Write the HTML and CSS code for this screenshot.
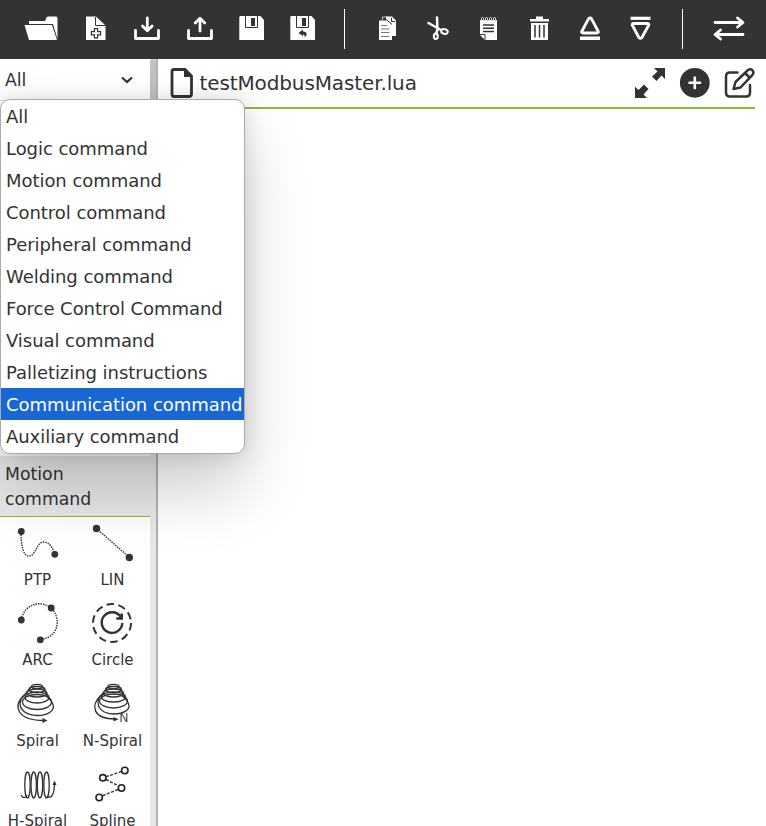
FILE: index.html
```html
<!DOCTYPE html>
<html lang="en">
<head>
<meta charset="utf-8">
<title>Program editor</title>
<link rel="stylesheet" href="styles.css">
</head>
<body>
<header class="toolbar">
  <svg class="tool first" viewBox="20 10 50 40"><path d="M29 21h16l1.500-3.500q.5-1 2-1H56q1.500 0 1.500 1.500V39L53 24H29z"/><path d="M24.500 25H52l5 15H29z"/></svg>
  <svg class="tool" viewBox="70 10 51 40"><path d="M86 16.500h10l9.500 9V40H86z"/><path class="dark-line thin" d="M95.500 17v8.500h10"/><path class="dark-fill" d="M93.800 28h4.400v3h3v4.400h-3v3h-4.400v-3h-3V31h3z"/><path d="M95 29.200h2v3h3v2h-3v3h-2v-3h-3v-2h3z"/></svg>
  <svg class="tool" viewBox="121 10 51 40"><path class="line" d="M135.500 30.500v8h23v-8M147.300 18v12.500M142.500 26l4.800 4.800 4.800-4.800"/></svg>
  <svg class="tool" viewBox="172 10 51 40"><path class="line" d="M188.500 30.500v8h23v-8M200 31V18.500M195.200 23l4.800-4.800 4.800 4.800"/></svg>
  <svg class="tool" viewBox="223 10 51 40"><path d="M240 16h20.500l3.500 4v20H239.300V17z"/><path class="dark-line thin" d="M245.500 16v11.500h12V16"/><path class="dark-fill" d="M251 18h4v8h-4z"/></svg>
  <svg class="tool" viewBox="274 10 51 40"><path d="M291 16h20.500l3.500 4v20H290.300V17z"/><path class="dark-line thin" d="M296.500 16v11.500h12V16"/><path class="dark-fill" d="M302 18h4v8h-4zM298.500 33l4.500-3.500v2c4 0 5 3.500 1.500 6 .5-2 0-3-1.500-3V36z"/></svg>
  <span class="divider"></span>
  <svg class="tool after" viewBox="361 10 51 40"><path d="M386 16.500h6l4 4V36h-4V24l-6-5z"/><path class="dim-line" d="M382.500 20v-3h6"/><path d="M379 20.500h9.500l3.500 3.500V40h-13z"/><path class="dark-line gray" d="M381 25.500h6M381 29h8.500M381 32.500h8.500M381 36.500h8.500"/><path class="dark-line thin" d="M387.500 20.500l4.500 4M391.500 18v3.500h3.500"/></svg>
  <svg class="tool" viewBox="412 10 51 40"><path class="line cut" d="M428.500 23l12.500 7M437 17.500l.5 12-1.500 4.500"/><ellipse class="line ring" cx="435.800" cy="36.300" rx="2" ry="2.800"/><ellipse class="line ring" cx="444.500" cy="31.500" rx="3.300" ry="2.300" transform="rotate(15 444.500 31.500)"/></svg>
  <svg class="tool" viewBox="463 10 51 40"><path d="M480 20h17v20h-12l-5-5z"/><path class="dim-line" d="M481.500 21v-3l1-1 1 1v3M485.500 21v-3l1-1 1 1v3M489.500 21v-3l1-1 1 1v3M493.500 21v-3l1-1 1 1v3"/><path class="dark-line thick" d="M483 25h11M483 28.300h11M483 31.500h11"/><path class="dark-line thin" d="M480 34.500h5V40"/></svg>
  <svg class="tool" viewBox="514 10 51 40"><path d="M530 19h6v-2.500h7V19h6v2.500h-19zM531 23h17v17h-17z"/><path class="dark-line thick" d="M535 25v12.500M539.500 25v12.500M544 25v12.500"/></svg>
  <svg class="tool" viewBox="565 10 51 40"><path class="line" d="M588.500 18.800l-6.800 12.700q-.5 1.500 1.500 1.500h13.600q2 0 1.500-1.500l-6.800-12.700q-1.500-1.600-3 0z"/><path d="M580 36.500h20V40h-20z"/></svg>
  <svg class="tool" viewBox="616 10 51 40"><path d="M630.500 16.700h20v3.200h-20z"/><path class="line" d="M638.900 37.500l-6.700-12.500q-.5-1.500 1.500-1.500h13.600q2 0 1.500 1.500l-6.900 12.500q-1.500 1.600-3 0z"/></svg>
  <span class="divider second"></span>
  <svg class="tool last" viewBox="700 10 60 40"><path class="line" d="M715 22.500h27M737.500 18l5.500 4.500-5.500 4.500M743 34.500h-27M720.500 30l-5.500 4.500 5.500 4.500"/></svg>
</header>
<div class="workspace">
  <aside class="sidebar">
    <div class="filter"><span>All</span><svg class="caret" viewBox="0 0 14 10"><path d="M2 2.500l5 4.500 5-4.500"/></svg>
      <ul class="menu">
        <li>All</li><li>Logic command</li><li>Motion command</li><li>Control command</li><li>Peripheral command</li><li>Welding command</li><li>Force Control Command</li><li>Visual command</li><li>Palletizing instructions</li><li class="selected">Communication command</li><li>Auxiliary command</li>
      </ul>
    </div>
    <div class="hidden-section"></div>
    <h2 class="group">Motion command</h2>
    <div class="commands">
      <div class="command"><svg viewBox="0 520 75 48"><path class="dotted" d="M21 532c0 13 2 24 8 24 7 0 7-14 15-14 5 0 8 5 11 12"/><circle cx="21.300" cy="531.500" r="3.400"/><circle cx="54.800" cy="554.300" r="3.400"/></svg><span>PTP</span></div>
      <div class="command"><svg viewBox="75 520 75 48"><path class="dotted" d="M96.500 528.500l33 29"/><circle cx="96.500" cy="528.500" r="3.700"/><circle cx="129.300" cy="557.500" r="3.700"/></svg><span>LIN</span></div>
      <div class="command"><svg viewBox="0 600 75 48"><path class="dotted" d="M21.500 620A18 18 0 0 1 51 608c10 9 9 29-10.500 31.500"/><circle cx="21.300" cy="620" r="3.400"/><circle cx="51.200" cy="608" r="3.400"/><circle cx="40.300" cy="639.800" r="3.400"/></svg><span>ARC</span></div>
      <div class="command"><svg viewBox="75 600 75 48"><circle class="stroke dash" cx="112" cy="623" r="19"/><path class="stroke turn" d="M121 617.500a10.300 10.300 0 1 0 1.300 5.500M121.800 613.500v5h-5.500"/></svg><span>Circle</span></div>
      <div class="command"><svg viewBox="0 680 75 48"><g class="coil"><ellipse cx="37" cy="685.500" rx="5.500" ry="2.200"/><ellipse cx="37" cy="688.500" rx="8" ry="3"/><ellipse cx="37" cy="692" rx="10" ry="4"/><ellipse cx="37" cy="696.500" rx="12" ry="5.500"/><ellipse cx="37" cy="701" rx="14.500" ry="7.500"/><path d="M23 695c-8 12 2 19.500 15 19.500 10 0 17-5 15-11-.5-3-5-7-8-9.500M24 694c-12 12-6 25.500 20 25.500M22 697l9-11M42.500 686l5.500 9"/></g><path d="M42.500 717l5 2.500-5 2.500z"/></svg><span>Spiral</span></div>
      <div class="command"><svg viewBox="75 680 75 48"><g class="coil"><ellipse cx="113.500" cy="685.500" rx="5.500" ry="2.200"/><ellipse cx="113.500" cy="688.500" rx="8" ry="3"/><ellipse cx="113.500" cy="692" rx="10" ry="4"/><ellipse cx="113.500" cy="696" rx="12" ry="5"/><ellipse cx="113.500" cy="700" rx="14" ry="7"/><path d="M100 695c-6 11 3 18 14 18 10 0 17-5 14.500-10-.5-3-5-7-8-9.500M101 694c-11 11-8 24 14 24M99 697l9-11M119 686l5.500 9"/></g><path d="M113.500 716l5 2.200-5 2.200z"/><text class="letter" x="119.500" y="721">N</text></svg><span>N-Spiral</span></div>
      <div class="command"><svg viewBox="0 760 75 48"><g class="coil"><ellipse cx="27.500" cy="784" rx="2.700" ry="13"/><ellipse cx="33.700" cy="784" rx="2.700" ry="13"/><ellipse cx="40" cy="784" rx="2.700" ry="13"/><ellipse cx="46.500" cy="784" rx="2.700" ry="13"/><path d="M21 794c2 4 5 3 6 0M47 795c4 4 7.500-2 7.500-13"/></g><path d="M52.500 784l2-4.500 2 4.500z"/></svg><span>H-Spiral</span></div>
      <div class="command"><svg viewBox="75 760 75 48"><path class="stroke link" d="M121.500 770.500l-15 5M106 778.500l12 6M118 788.500l-15 6"/><g class="node"><circle cx="124.800" cy="769.500" r="3.200"/><circle cx="102.800" cy="776.800" r="3.200"/><circle cx="121.500" cy="787" r="3.200"/><circle cx="99.200" cy="796.500" r="3.200"/></g></svg><span>Spline</span></div>
    </div>
  </aside>
  <div class="scrollbar"><div class="thumb"></div></div>
  <main class="editor">
    <div class="file-bar">
      <svg class="file-icon" viewBox="170 67 24 32"><path class="stroke" d="M174 69.500h11l6.500 6.500v18q0 2.500-2.500 2.500h-15q-2 0-2-2.500V71.500q0-2 2-2z"/><path d="M184 69l8 8h-8z"/></svg>
      <h1>testModbusMaster.lua</h1>
      <svg class="actions" viewBox="630 63 125 40"><path d="M654 68h11v11l-3.500-3.500-5 5.500-4.500-4.500 5.500-5zM635 98V86.500l3.500 3.500 5.500-5.500 4.500 4.500-5 5.500 3.500 3.500z"/><circle cx="694.800" cy="82.800" r="14.900"/><path class="plus" d="M689.500 82.800h10.600M694.800 77.500v10.600"/><path class="stroke pencil" d="M737.500 72.500H730q-4 0-4 4v16q0 4 4 4h16q4 0 4-4v-7.500"/><path class="stroke pencil" d="M733.500 89l2-7 12.500-12q2.500-1.500 4.500.3 1.800 2 0 4.500L740.500 87.500zM745.500 73.500l4 4"/></svg>
    </div>
  </main>
</div>
</body>
</html>
```
FILE: styles.css
```css
* { box-sizing: border-box; }
body { margin: 0; width: 766px; height: 826px; overflow: hidden; background: #fff; color: #333; font-family: "DejaVu Sans", sans-serif; }
svg { display: block; fill: #333; flex: none; }
.toolbar { display: flex; height: 59px; padding: 10px 0 0 20px; background: #333; }
.tool { width: 51px; height: 40px; fill: #fff; }
.tool.first { width: 50px; }
.line { fill: none; stroke: #fff; stroke-width: 2.800; stroke-linecap: round; stroke-linejoin: round; }
.cut { stroke-width: 2.500; }
.ring { stroke-width: 2; }
.dim-line { fill: none; stroke: #ccc; stroke-width: 1; }
.dark-line { fill: none; stroke: #333; }
.thin { stroke-width: 1; }
.gray { stroke: #777; }
.thick { stroke-width: 1.500; }
.dark-fill { fill: #333; }
.divider { flex: none; width: 1px; height: 40px; margin: -1px 16px 0 19px; background: #fff; }
.divider.second { margin: -1px 17px 0 15px; }
.tool.last { width: 60px; }
.workspace { display: flex; height: 767px; }
.sidebar { width: 150px; }
.filter { position: relative; display: flex; justify-content: space-between; align-items: center; height: 41px; padding: 0 16px 0 5px; font-size: 17.300px; }
.caret { width: 14px; height: 10px; }
.caret path { fill: none; stroke: #333; stroke-width: 2.200; }
.menu { position: absolute; z-index: 2; left: 0; top: 40px; width: 245px; height: 355px; margin: 0; padding: 0; list-style: none; background: #fff; border: 1px solid #aaa; border-radius: 10px; box-shadow: 0 36px 64px rgba(0,0,0,.2), 0 0 21px rgba(0,0,0,.13); font-size: 18px; letter-spacing: -.05px; }
.menu li { height: 32px; padding-left: 5px; line-height: 33px; white-space: nowrap; }
.menu .selected { background: #1967d2; color: #fff; }
.hidden-section { height: 356px; border-top: 1px solid #ddd; background: linear-gradient(#8dbb33, #8dbb33) 0 33px / 100% 1px no-repeat; }
.group { height: 61px; margin: 0; padding: 6px 5px; border-bottom: 1px solid #8dbb33; background: #e8e8e8; font-size: 17.300px; font-weight: 400; line-height: 25px; }
.commands { display: grid; grid-template-columns: 75px 75px; grid-auto-rows: 80.300px; padding-top: 3px; }
.command { text-align: center; font-size: 15px; line-height: 24px; }
.command svg { width: 75px; height: 48px; }
.dotted { fill: none; stroke: #333; stroke-width: 1.400; stroke-dasharray: 1.500 1; }
.stroke { fill: none; stroke: #333; stroke-width: 2.800; }
.turn { stroke-width: 2.400; }
.dash { stroke-width: 2; stroke-dasharray: 7.500 4.430; }
.coil { fill: none; stroke: #333; stroke-width: 1.300; }
.letter { font-family: "Liberation Sans", sans-serif; font-size: 12px; }
.link { stroke-width: 1.400; stroke-dasharray: 3 1.500; }
.node { fill: #fff; stroke: #222; stroke-width: 1.600; }
.scrollbar { width: 8px; background: #e8e8e8; border-right: 2px solid #b3b3b3; }
.thumb { height: 150px; background: #c1c1c1; border-radius: 3px; }
.editor { flex: 1; padding-right: 11px; }
.file-bar { display: flex; align-items: center; height: 50px; padding-left: 12px; border-bottom: 2px solid #8dbb33; }
.file-icon { width: 24px; height: 32px; }
h1 { flex: 1; margin: 0 0 0 5.500px; font-size: 20px; font-weight: 400; letter-spacing: -.120px; }
.actions { width: 125px; height: 40px; }
.plus { stroke: #fff; stroke-width: 2.600; stroke-linecap: round; }
.pencil { stroke-width: 2.500; stroke-linejoin: round; stroke-linecap: round; }
```
